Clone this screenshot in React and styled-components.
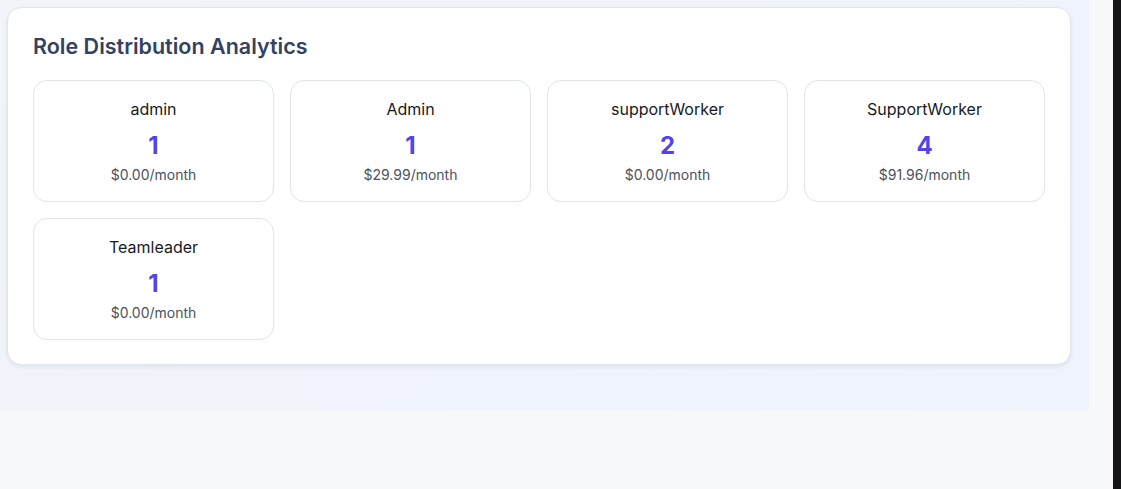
import React from "react";
import styled, { createGlobalStyle } from "styled-components";

const GlobalStyle = createGlobalStyle`
  html, body { margin: 0; padding: 0; }
  body {
    background: #f7f8fa;
    font-family: Inter, "Noto Sans", "Liberation Sans", sans-serif;
    -webkit-font-smoothing: antialiased;
  }
`;

const Shell = styled.div`
  display: flex;
  min-height: 489px;
`;

const Main = styled.main`
  flex: 1;
  display: flex;
  flex-direction: column;
  align-items: flex-start;
`;

const Scrollbar = styled.div`
  width: 8px;
  flex-shrink: 0;
  background: #141418;
`;

const Section = styled.section`
  width: 1089px;
  box-sizing: border-box;
  padding: 7px 18px 45px 7px;
  background: linear-gradient(135deg, #f2f4f9 0%, #eef3fd 100%);
`;

const Panel = styled.div`
  background: #ffffff;
  border: 1px solid #e1e5ee;
  border-radius: 14px;
  box-shadow: 0 2px 4px rgba(30, 41, 80, 0.08);
  padding: 26px 25px 24px;
`;

const Title = styled.h3`
  margin: 0 0 22px;
  font-size: 21.5px;
  line-height: 24px;
  font-weight: 600;
  color: #334261;
`;

const Grid = styled.div`
  display: grid;
  grid-template-columns: repeat(4, 1fr);
  gap: 16px;
`;

const RoleCard = styled.div`
  border: 1px solid #e1e4ee;
  border-radius: 14px;
  padding: 16px 16px 16px;
  text-align: center;
  background: #fff;
`;

const RoleName = styled.div`
  font-size: 16px;
  line-height: 24px;
  color: #161a24;
  margin-bottom: 9px;
`;

const Count = styled.div`
  font-size: 24px;
  line-height: 32px;
  font-weight: 700;
  color: #4f46e5;
  margin-bottom: 3px;
`;

const Price = styled.div`
  font-size: 14px;
  line-height: 20px;
  color: #4b5262;
`;

const roles = [
  { name: "admin", count: 1, price: "$0.00/month" },
  { name: "Admin", count: 1, price: "$29.99/month" },
  { name: "supportWorker", count: 2, price: "$0.00/month" },
  { name: "SupportWorker", count: 4, price: "$91.96/month" },
  { name: "Teamleader", count: 1, price: "$0.00/month" },
];

export default function App() {
  return (
    <>
      <GlobalStyle />
      <Shell>
        <Main>
          <Section>
            <Panel>
              <Title>Role Distribution Analytics</Title>
              <Grid>
                {roles.map((r) => (
                  <RoleCard key={r.name}>
                    <RoleName>{r.name}</RoleName>
                    <Count>{r.count}</Count>
                    <Price>{r.price}</Price>
                  </RoleCard>
                ))}
              </Grid>
            </Panel>
          </Section>
        </Main>
        <Scrollbar />
      </Shell>
    </>
  );
}
